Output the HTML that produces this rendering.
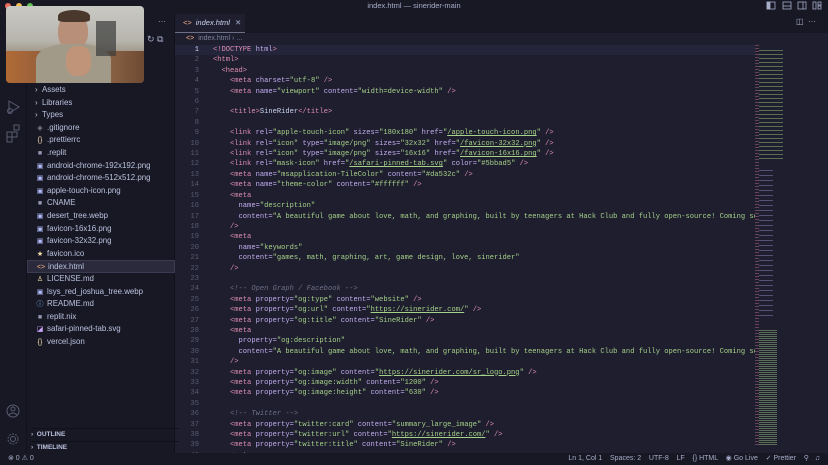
<!DOCTYPE html>
<html><head><meta charset="utf-8"><style>
*{margin:0;padding:0;box-sizing:border-box}
body{width:828px;height:465px;overflow:hidden;background:#1e1e2e;font-family:"Liberation Sans",sans-serif;position:relative;color:#cdd6f4}
.abs{position:absolute}
#title{left:0;top:0;width:828px;height:14px;background:#181825;font-size:7.5px;color:#a6adc8;text-align:center;line-height:11px}
#act{left:0;top:14px;width:27px;height:439px;background:#181825;border-right:1px solid #11111b}
#side{left:27px;top:14px;width:148px;height:439px;background:#181825;border-right:1px solid #11111b}
.f{position:absolute;left:0;width:148px;height:12.6px;font-size:7.9px;line-height:12.6px;color:#bac2de;white-space:nowrap}
.f i{font-style:normal;display:inline-block;width:10px;text-align:center;margin-right:2px;font-size:7px}
#tabs{left:175px;top:14px;width:653px;height:19px;background:#181825}
#tab{left:175px;top:14px;width:70px;height:19px;background:#1e1e2e;font-size:7.5px;line-height:18px;color:#cdd6f4;font-style:italic;border-bottom:1px solid #6c7086}
#crumb{left:175px;top:33px;height:12px;font-size:7px;line-height:12px;color:#7f849c}
#code{left:175px;top:45px;width:580px;font-family:"Liberation Mono",monospace;font-size:7.1px;line-height:10.4px;white-space:pre;color:#cdd6f4;overflow:hidden}
.ln{display:inline-block;width:24px;text-align:right;color:#585b70;margin-right:14px}
.t{color:#e08fb4}.a{color:#c2aef0}.s{color:#a6d189}.u{color:#a6d189;text-decoration:underline}.c{color:#6c7086;font-style:italic}
#status{left:0;top:453px;width:828px;height:12px;background:#181825;font-size:7px;line-height:12px;color:#a6adc8}
.mm{position:absolute;opacity:.45}
</style></head><body>
<div id="title" class="abs">index.html — sinerider-main</div>
<div class="abs" style="left:5px;top:3px;width:6px;height:6px;border-radius:50%;background:#ed6a5e"></div>
<div class="abs" style="left:16px;top:3px;width:6px;height:6px;border-radius:50%;background:#f5bf4f"></div>
<div class="abs" style="left:27px;top:3px;width:6px;height:6px;border-radius:50%;background:#61c554"></div>
<svg class="abs" style="left:765px;top:1px" width="60" height="10" fill="none" stroke="#a6adc8" stroke-width=".8"><rect x="2" y="1" width="8" height="7"/><rect x="2" y="1" width="3" height="7" fill="#a6adc8"/><rect x="18" y="1" width="8" height="7"/><line x1="18" y1="5" x2="26" y2="5"/><rect x="33" y="1" width="8" height="7"/><line x1="38" y1="1" x2="38" y2="8"/><rect x="48" y="1" width="3" height="7"/><rect x="53" y="1" width="3" height="3"/><rect x="53" y="5" width="3" height="3"/></svg>
<div id="act" class="abs"></div>
<svg class="abs" style="left:5px;top:95px" width="18" height="50" fill="none" stroke="#585b70" stroke-width="1"><path d="M4 6 L14 12 L4 18 Z"/><circle cx="5" cy="16" r="2.5"/><rect x="2" y="37" width="5" height="5"/><rect x="7" y="37" width="5" height="5"/><rect x="2" y="42" width="5" height="5"/><rect x="9" y="30" width="5" height="5"/></svg>
<svg class="abs" style="left:6px;top:404px" width="16" height="46" fill="none" stroke="#585b70" stroke-width="1"><circle cx="7" cy="7" r="6"/><circle cx="7" cy="5" r="2"/><path d="M3 11 Q7 7 11 11"/><circle cx="7" cy="35" r="2.5"/><circle cx="7" cy="35" r="5" stroke-dasharray="2 1.2"/></svg>
<div id="side" class="abs">
<div class="abs" style="right:8px;top:3px;font-size:8px;color:#a6adc8">···</div>
<div class="abs" style="left:120px;top:20px;font-size:9px;color:#a6adc8">↻ ⧉</div>
<div class="f" style="top:70px;left:8px">› &nbsp;Assets</div>
<div class="f" style="top:82.6px;left:8px">› &nbsp;Libraries</div>
<div class="f" style="top:95.2px;left:8px">› &nbsp;Types</div>
<div class="f" style="top:107.8px;left:8px"><i style="color:#7f849c">◈</i>.gitignore</div>
<div class="f" style="top:120.4px;left:8px"><i style="color:#f9e2af">{}</i>.prettierrc</div>
<div class="f" style="top:133px;left:8px"><i style="color:#9399b2">■</i>.replit</div>
<div class="f" style="top:145.6px;left:8px"><i style="color:#b4befe">▣</i>android-chrome-192x192.png</div>
<div class="f" style="top:158.2px;left:8px"><i style="color:#b4befe">▣</i>android-chrome-512x512.png</div>
<div class="f" style="top:170.8px;left:8px"><i style="color:#b4befe">▣</i>apple-touch-icon.png</div>
<div class="f" style="top:183.4px;left:8px"><i style="color:#9399b2">■</i>CNAME</div>
<div class="f" style="top:196px;left:8px"><i style="color:#b4befe">▣</i>desert_tree.webp</div>
<div class="f" style="top:208.6px;left:8px"><i style="color:#b4befe">▣</i>favicon-16x16.png</div>
<div class="f" style="top:221.2px;left:8px"><i style="color:#b4befe">▣</i>favicon-32x32.png</div>
<div class="f" style="top:233.8px;left:8px"><i style="color:#f9e2af">★</i>favicon.ico</div>
<div class="f" style="top:246.4px;left:0;padding-left:8px;background:#2a2a3c;border:1px solid #3a3a50"><i style="color:#fab387">&lt;&gt;</i>index.html</div>
<div class="f" style="top:259px;left:8px"><i style="color:#f9e2af">♙</i>LICENSE.md</div>
<div class="f" style="top:271.6px;left:8px"><i style="color:#b4befe">▣</i>lsys_red_joshua_tree.webp</div>
<div class="f" style="top:284.2px;left:8px"><i style="color:#89b4fa">ⓘ</i>README.md</div>
<div class="f" style="top:296.8px;left:8px"><i style="color:#9399b2">■</i>replit.nix</div>
<div class="f" style="top:309.4px;left:8px"><i style="color:#cba6f7">◪</i>safari-pinned-tab.svg</div>
<div class="f" style="top:322px;left:8px"><i style="color:#f9e2af">{}</i>vercel.json</div>
<div class="f" style="top:414px;left:4px;font-size:6.5px;font-weight:bold;border-top:1px solid #11111b">› &nbsp;OUTLINE</div>
<div class="f" style="top:426.6px;left:4px;font-size:6.5px;font-weight:bold;border-top:1px solid #11111b">› &nbsp;TIMELINE</div>
</div>
<div class="abs" style="left:6px;top:6px;width:138px;height:77px;border-radius:4px;overflow:hidden;background:linear-gradient(180deg,#c9c9c4 0%,#b7b5ad 45%,#8a7a66 75%,#a0603a 100%)">
<div class="abs" style="left:0;top:45px;width:138px;height:32px;background:linear-gradient(90deg,#b06a36,#8a5a3c 40%,#9a7050 60%,#6e4a32)"></div>
<div class="abs" style="left:52px;top:8px;width:30px;height:36px;border-radius:45%;background:#b88f78"></div>
<div class="abs" style="left:52px;top:4px;width:32px;height:12px;border-radius:50% 50% 20% 20%;background:#4a382c"></div>
<div class="abs" style="left:30px;top:38px;width:75px;height:40px;border-radius:40% 40% 0 0;background:#a29a88"></div>
<div class="abs" style="left:60px;top:40px;width:25px;height:30px;border-radius:40%;background:#c09478"></div>
<div class="abs" style="left:90px;top:15px;width:20px;height:35px;background:#3a3a3a;opacity:.7"></div>
</div>
<div id="tabs" class="abs"></div>
<div id="tab" class="abs"><span style="color:#fab387;font-style:normal;margin:0 4px 0 8px">&lt;&gt;</span>index.html <span style="font-style:normal;color:#a6adc8;margin-left:3px">✕</span></div>
<div class="abs" style="left:796px;top:17px;font-size:8px;color:#a6adc8">◫ &nbsp;···</div>
<div id="crumb" class="abs"><span style="color:#fab387;margin:0 4px 0 11px">&lt;&gt;</span>index.html › ...</div>
<div class="abs" style="left:175px;top:45px;width:580px;height:10.4px;background:#24243a"></div>
<div id="code" class="abs"><div><span class="ln" style="color:#cdd6f4">1</span><span class="t">&lt;!DOCTYPE</span> <span class="a">html</span><span class="t">&gt;</span></div><div><span class="ln">2</span><span class="t">&lt;html&gt;</span></div><div><span class="ln">3</span>  <span class="t">&lt;head&gt;</span></div><div><span class="ln">4</span>    <span class="t">&lt;meta</span> <span class="a">charset=</span><span class="s">"utf-8"</span> <span class="t">/&gt;</span></div><div><span class="ln">5</span>    <span class="t">&lt;meta</span> <span class="a">name=</span><span class="s">"viewport"</span> <span class="a">content=</span><span class="s">"width=device-width"</span> <span class="t">/&gt;</span></div><div><span class="ln">6</span></div><div><span class="ln">7</span>    <span class="t">&lt;title&gt;</span>SineRider<span class="t">&lt;/title&gt;</span></div><div><span class="ln">8</span></div><div><span class="ln">9</span>    <span class="t">&lt;link</span> <span class="a">rel=</span><span class="s">"apple-touch-icon"</span> <span class="a">sizes=</span><span class="s">"180x180"</span> <span class="a">href=</span><span class="s">"<span class="u">/apple-touch-icon.png</span>"</span> <span class="t">/&gt;</span></div><div><span class="ln">10</span>    <span class="t">&lt;link</span> <span class="a">rel=</span><span class="s">"icon"</span> <span class="a">type=</span><span class="s">"image/png"</span> <span class="a">sizes=</span><span class="s">"32x32"</span> <span class="a">href=</span><span class="s">"<span class="u">/favicon-32x32.png</span>"</span> <span class="t">/&gt;</span></div><div><span class="ln">11</span>    <span class="t">&lt;link</span> <span class="a">rel=</span><span class="s">"icon"</span> <span class="a">type=</span><span class="s">"image/png"</span> <span class="a">sizes=</span><span class="s">"16x16"</span> <span class="a">href=</span><span class="s">"<span class="u">/favicon-16x16.png</span>"</span> <span class="t">/&gt;</span></div><div><span class="ln">12</span>    <span class="t">&lt;link</span> <span class="a">rel=</span><span class="s">"mask-icon"</span> <span class="a">href=</span><span class="s">"<span class="u">/safari-pinned-tab.svg</span>"</span> <span class="a">color=</span><span class="s">"#5bbad5"</span> <span class="t">/&gt;</span></div><div><span class="ln">13</span>    <span class="t">&lt;meta</span> <span class="a">name=</span><span class="s">"msapplication-TileColor"</span> <span class="a">content=</span><span class="s">"#da532c"</span> <span class="t">/&gt;</span></div><div><span class="ln">14</span>    <span class="t">&lt;meta</span> <span class="a">name=</span><span class="s">"theme-color"</span> <span class="a">content=</span><span class="s">"#ffffff"</span> <span class="t">/&gt;</span></div><div><span class="ln">15</span>    <span class="t">&lt;meta</span></div><div><span class="ln">16</span>      <span class="a">name=</span><span class="s">"description"</span></div><div><span class="ln">17</span>      <span class="a">content=</span><span class="s">"A beautiful game about love, math, and graphing, built by teenagers at Hack Club and fully open-source! Coming soon"</span></div><div><span class="ln">18</span>    <span class="t">/&gt;</span></div><div><span class="ln">19</span>    <span class="t">&lt;meta</span></div><div><span class="ln">20</span>      <span class="a">name=</span><span class="s">"keywords"</span></div><div><span class="ln">21</span>      <span class="a">content=</span><span class="s">"games, math, graphing, art, game design, love, sinerider"</span></div><div><span class="ln">22</span>    <span class="t">/&gt;</span></div><div><span class="ln">23</span></div><div><span class="ln">24</span>    <span class="c">&lt;!-- Open Graph / Facebook --&gt;</span></div><div><span class="ln">25</span>    <span class="t">&lt;meta</span> <span class="a">property=</span><span class="s">"og:type"</span> <span class="a">content=</span><span class="s">"website"</span> <span class="t">/&gt;</span></div><div><span class="ln">26</span>    <span class="t">&lt;meta</span> <span class="a">property=</span><span class="s">"og:url"</span> <span class="a">content=</span><span class="s">"<span class="u">https://sinerider.com/</span>"</span> <span class="t">/&gt;</span></div><div><span class="ln">27</span>    <span class="t">&lt;meta</span> <span class="a">property=</span><span class="s">"og:title"</span> <span class="a">content=</span><span class="s">"SineRider"</span> <span class="t">/&gt;</span></div><div><span class="ln">28</span>    <span class="t">&lt;meta</span></div><div><span class="ln">29</span>      <span class="a">property=</span><span class="s">"og:description"</span></div><div><span class="ln">30</span>      <span class="a">content=</span><span class="s">"A beautiful game about love, math, and graphing, built by teenagers at Hack Club and fully open-source! Coming soon"</span></div><div><span class="ln">31</span>    <span class="t">/&gt;</span></div><div><span class="ln">32</span>    <span class="t">&lt;meta</span> <span class="a">property=</span><span class="s">"og:image"</span> <span class="a">content=</span><span class="s">"<span class="u">https://sinerider.com/sr_logo.png</span>"</span> <span class="t">/&gt;</span></div><div><span class="ln">33</span>    <span class="t">&lt;meta</span> <span class="a">property=</span><span class="s">"og:image:width"</span> <span class="a">content=</span><span class="s">"1200"</span> <span class="t">/&gt;</span></div><div><span class="ln">34</span>    <span class="t">&lt;meta</span> <span class="a">property=</span><span class="s">"og:image:height"</span> <span class="a">content=</span><span class="s">"630"</span> <span class="t">/&gt;</span></div><div><span class="ln">35</span></div><div><span class="ln">36</span>    <span class="c">&lt;!-- Twitter --&gt;</span></div><div><span class="ln">37</span>    <span class="t">&lt;meta</span> <span class="a">property=</span><span class="s">"twitter:card"</span> <span class="a">content=</span><span class="s">"summary_large_image"</span> <span class="t">/&gt;</span></div><div><span class="ln">38</span>    <span class="t">&lt;meta</span> <span class="a">property=</span><span class="s">"twitter:url"</span> <span class="a">content=</span><span class="s">"<span class="u">https://sinerider.com/</span>"</span> <span class="t">/&gt;</span></div><div><span class="ln">39</span>    <span class="t">&lt;meta</span> <span class="a">property=</span><span class="s">"twitter:title"</span> <span class="a">content=</span><span class="s">"SineRider"</span> <span class="t">/&gt;</span></div><div><span class="ln">40</span>    <span class="t">&lt;meta</span></div></div>
<div class="mm" style="left:755px;top:45px;width:4px;height:400px;background:repeating-linear-gradient(180deg,#c07090 0 1px,transparent 1px 3px)"></div>
<div class="mm" style="left:759px;top:50px;width:24px;height:110px;background:repeating-linear-gradient(180deg,#a6d189 0 1px,transparent 1px 4px)"></div>
<div class="mm" style="left:759px;top:170px;width:14px;height:150px;background:repeating-linear-gradient(180deg,#9a8ed0 0 1px,transparent 1px 5px)"></div>
<div class="mm" style="left:759px;top:330px;width:18px;height:115px;background:repeating-linear-gradient(180deg,#a6d189 0 1px,transparent 1px 2px)"></div>
<div id="status" class="abs"><span style="margin-left:8px">⊗ 0 ⚠ 0</span><span style="position:absolute;right:8px">Ln 1, Col 1 &nbsp;&nbsp; Spaces: 2 &nbsp;&nbsp; UTF-8 &nbsp;&nbsp; LF &nbsp;&nbsp; {} HTML &nbsp;&nbsp; ◉ Go Live &nbsp;&nbsp; ✓ Prettier &nbsp;&nbsp; ⚲ &nbsp; ♫</span></div>
</body></html>
